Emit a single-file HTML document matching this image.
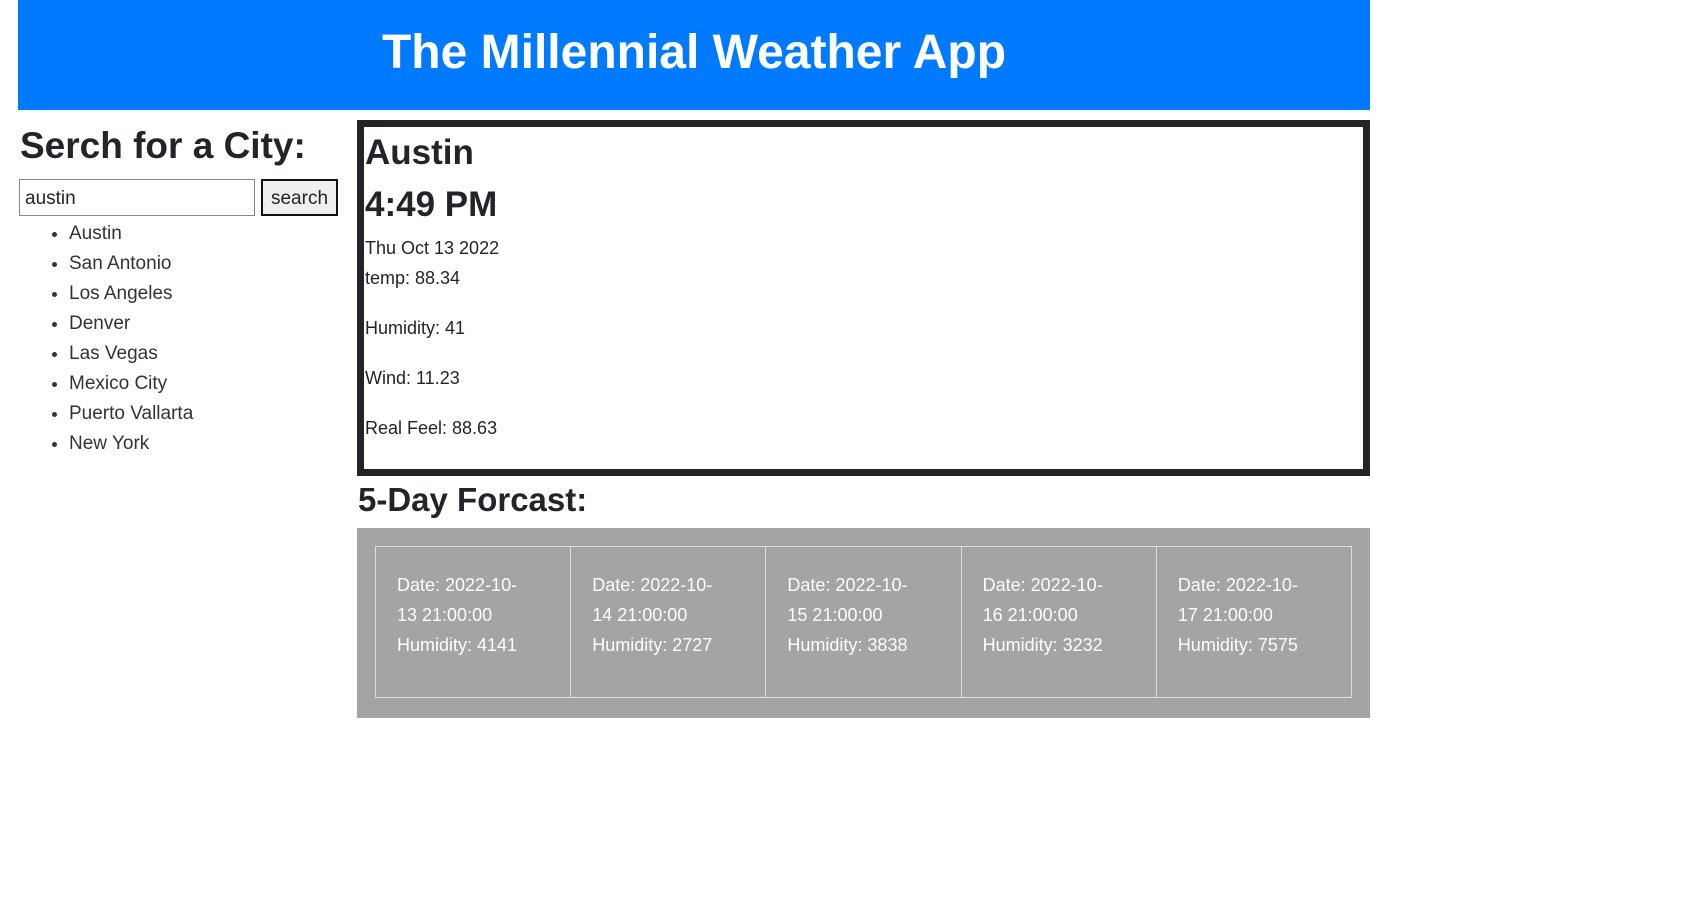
<!DOCTYPE html>
<html><head><meta charset="utf-8"><style>
*{box-sizing:border-box;margin:0;padding:0}
body{width:1708px;height:910px;background:#fff;font-family:"Liberation Sans",sans-serif;color:#212529;position:relative;overflow:hidden}
.hdr{position:absolute;left:18px;top:0;width:1352px;height:110px;background:#007bff;color:#fff;font-size:48px;font-weight:bold;text-align:center;line-height:106px}
h2.s{position:absolute;left:20px;top:125px;font-size:37px;font-weight:bold}
.inp{position:absolute;left:19px;top:179px;width:236px;height:37px;border:1px solid #888;font-size:19px;padding:8px 5px}
.btn{position:absolute;left:261px;top:179px;width:77px;height:37px;border:2px solid #111;background:#efefef;font-size:19px;text-align:center;line-height:35px}
ul{position:absolute;left:69px;top:219px;font-size:19px;line-height:30px;color:#333}
.box{position:absolute;left:357px;top:120px;width:1013px;height:356px;border:7px solid #212529;padding-left:1px}
.box .a{position:absolute;left:1px;top:6px;font-size:35px;font-weight:bold}
.box .t{position:absolute;left:1px;top:58px;font-size:35px;font-weight:bold}
.box p{position:absolute;left:1px;font-size:18px}
h3{position:absolute;left:358px;top:481px;font-size:33px;font-weight:bold}
.g{position:absolute;left:357px;top:528px;width:1013px;height:190px;background:#a4a4a6}
.cards{position:absolute;left:18px;top:18px;width:977px;height:152px;display:flex;border:1px solid #ddd}
.c{flex:1;border-right:1px solid #ddd;color:#fff;font-size:18px;line-height:30px;padding:23px 0 0 21px}
.c:last-child{border-right:none}
</style></head><body>
<div class="hdr">The Millennial Weather App</div>
<h2 class="s">Serch for a City:</h2>
<div class="inp">austin</div>
<div class="btn">search</div>
<ul><li>Austin</li><li>San Antonio</li><li>Los Angeles</li><li>Denver</li><li>Las Vegas</li><li>Mexico City</li><li>Puerto Vallarta</li><li>New York</li></ul>
<div class="box">
<div class="a">Austin</div>
<div class="t">4:49 PM</div>
<p style="top:111px">Thu Oct 13 2022</p>
<p style="top:141px">temp: 88.34</p>
<p style="top:191px">Humidity: 41</p>
<p style="top:241px">Wind: 11.23</p>
<p style="top:291px">Real Feel: 88.63</p>
</div>
<h3>5-Day Forcast:</h3>
<div class="g"><div class="cards">
<div class="c">Date: 2022-10-<br>13 21:00:00<br>Humidity: 4141</div>
<div class="c">Date: 2022-10-<br>14 21:00:00<br>Humidity: 2727</div>
<div class="c">Date: 2022-10-<br>15 21:00:00<br>Humidity: 3838</div>
<div class="c">Date: 2022-10-<br>16 21:00:00<br>Humidity: 3232</div>
<div class="c">Date: 2022-10-<br>17 21:00:00<br>Humidity: 7575</div>
</div></div>
</body></html>
